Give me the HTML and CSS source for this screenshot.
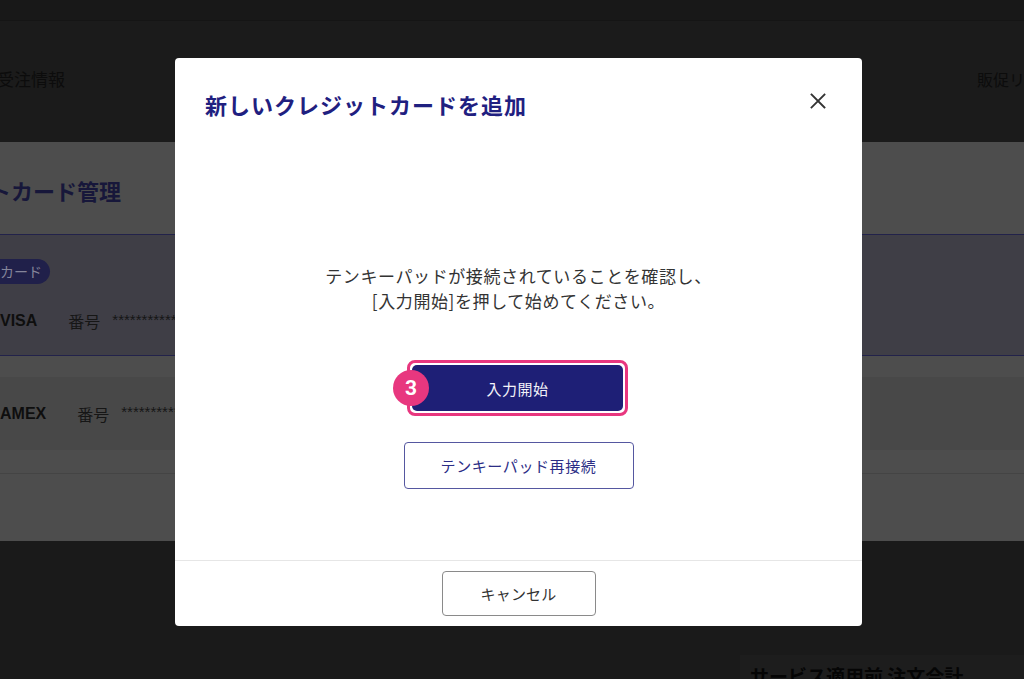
FILE: index.html
```html
<!DOCTYPE html>
<html lang="ja">
<head>
<meta charset="utf-8">
<title>新しいクレジットカードを追加</title>
<link rel="stylesheet" href="styles.css">
</head>
<body>
<div class="page">
  <div class="topstrip"></div>
  <header class="nav">
    <span class="nav-left">受注情報</span>
    <span class="nav-right">販促リスト</span>
  </header>
  <section class="panel">
    <h1 class="panel-title">クレジットカード管理</h1>
    <div class="card-row selected">
      <span class="badge">メインカード</span>
      <div class="card-line"><b class="brand">VISA</b><span class="label">番号</span><span class="stars">****************</span></div>
    </div>
    <div class="gap-band"></div>
    <div class="card-row plain">
      <div class="card-line"><b class="brand">AMEX</b><span class="label">番号</span><span class="stars">****************</span></div>
    </div>
    <div class="rest-a"></div>
    <div class="rest-b"></div>
  </section>
  <section class="below">
    <div class="below-band"></div>
    <div class="summary"><h2 class="summary-title">サービス適用前 注文合計</h2></div>
  </section>
</div>

<div class="overlay">
  <div class="modal" role="dialog">
    <div class="modal-header">
      <h2 class="modal-title">新しいクレジットカードを追加</h2>
      <button class="close" aria-label="閉じる">
        <svg width="16" height="16" viewBox="0 0 16 16"><path d="M1.5 1.5 L14.5 14.5 M14.5 1.5 L1.5 14.5" stroke="#333" stroke-width="1.8" fill="none" stroke-linecap="square"/></svg>
      </button>
    </div>
    <div class="modal-body">
      <p class="msg">テンキーパッドが接続されていることを確認し、<br>[入力開始]を押して始めてください。</p>
      <div class="highlight">
        <span class="step">3</span>
        <button class="btn-primary">入力開始</button>
      </div>
      <button class="btn-secondary">テンキーパッド再接続</button>
    </div>
    <div class="modal-footer">
      <button class="btn-cancel">キャンセル</button>
    </div>
  </div>
</div>
</body>
</html>
```
FILE: styles.css
```css
* { box-sizing: border-box; }
html, body { margin: 0; padding: 0; }
body {
  width: 1024px;
  height: 679px;
  overflow: hidden;
  background: #1a1a1a;
  font-family: "Noto Sans CJK JP", "Noto Sans", sans-serif;
  position: relative;
}
.page { width: 1024px; height: 679px; overflow: hidden; }
.topstrip { height: 21px; background: #181818; border-bottom: 1px solid #151515; }
.nav {
  height: 121px;
  background: #1b1b1b;
  display: flex;
  justify-content: space-between;
  align-items: flex-start;
  padding-top: 46px;
  font-size: 17px;
  color: #0c0c0c;
  line-height: 24px;
}
.nav-left { margin-left: -3px; }
.nav-right { margin-right: -33px; font-size: 16px; }

.panel { background: #4d4d4d; height: 399px; display: flex; flex-direction: column; }
.panel-title {
  margin: 0;
  padding-top: 30px;
  height: 92px;
  font-size: 22px;
  line-height: 36px;
  font-weight: 700;
  color: #17173a;
  text-indent: -99px;
  white-space: nowrap;
}
.card-row.selected {
  background: #3f3e46;
  border-top: 1px solid #22224a;
  border-bottom: 1px solid #22224a;
  height: 122px;
  padding-top: 23px;
}
.badge {
  display: inline-block;
  margin-left: -52px;
  height: 25px;
  line-height: 25px;
  padding: 0 8px 0 10px;
  border-radius: 13px;
  background: #20204a;
  color: #85859a;
  font-size: 14px;
}
.card-line {
  display: flex;
  align-items: center;
  height: 24px;
  white-space: nowrap;
}
.selected .card-line { margin-top: 25px; }
.brand { font-family: "Liberation Sans", "Noto Sans", sans-serif; font-size: 16px; font-weight: 700; color: #0e0e0e; }
.label { font-size: 16px; color: #161616; margin-left: 31px; }
.stars { font-family: "Liberation Sans", sans-serif; font-size: 15px; color: #161616; margin-left: 12px; position: relative; top: -2px; }
.gap-band { height: 21px; }
.card-row.plain { background: #484848; height: 73px; display: flex; align-items: center; }
.rest-a { height: 24px; border-bottom: 1px solid #444; }
.rest-b { flex: 1; }

.below { height: 138px; display: flex; flex-direction: column; overflow: hidden; }
.below-band { height: 114px; flex-shrink: 0; }
.summary { margin-left: 740px; flex: 1 0 auto; background: #1d1d1d; padding: 6px 0 0 10px; }
.summary-title { margin: 0; font-size: 19px; font-weight: 700; color: #050505; line-height: 30px; white-space: nowrap; }

.overlay {
  position: absolute;
  inset: 0;
  padding: 58px 0 0 175px;
}
.modal {
  width: 687px;
  height: 568px;
  background: #fff;
  border-radius: 4px;
  display: flex;
  flex-direction: column;
}
.modal-header {
  display: flex;
  justify-content: space-between;
  align-items: flex-start;
  padding: 30px 36px 0 30px;
  height: 62px;
}
.modal-title {
  margin: 0;
  font-size: 22px;
  line-height: 32px;
  font-weight: 700;
  letter-spacing: 1px;
  color: #1f2080;
}
.close {
  margin-top: 5px;
  padding: 0;
  border: 0;
  background: none;
  width: 16px;
  height: 16px;
  display: block;
}
.close svg { display: block; }
.modal-body {
  flex: 1;
  display: flex;
  flex-direction: column;
  align-items: center;
  padding-top: 143px;
}
.msg {
  margin: 0;
  text-align: center;
  font-size: 17px;
  line-height: 25px;
  letter-spacing: 0.6px;
  color: #333;
}
.highlight {
  position: relative;
  margin-top: 47px;
  border: 3px solid #e8377f;
  border-radius: 8px;
  padding: 2px;
  background: #fff;
  margin-left: -2px;
}
.step {
  position: absolute;
  left: -17px;
  top: 7px;
  width: 36px;
  height: 36px;
  border-radius: 50%;
  background: #e8377f;
  color: #fff;
  font-family: "Roboto", "Liberation Sans", sans-serif;
  font-weight: 700;
  font-size: 21px;
  line-height: 36px;
  text-align: center;
  z-index: 1;
}
.btn-primary {
  display: block;
  width: 211px;
  height: 46px;
  border: 0;
  border-radius: 5px;
  background: #1e1f76;
  color: #f2f2f8;
  font-family: inherit;
  font-size: 15px;
  letter-spacing: 0.5px;
  padding: 0;
}
.btn-secondary {
  margin-top: 26px;
  width: 230px;
  height: 47px;
  border: 1.5px solid #5557a0;
  border-radius: 4px;
  background: #fff;
  color: #2c2e86;
  font-family: inherit;
  font-size: 15px;
  letter-spacing: 0.6px;
}
.modal-footer {
  border-top: 1px solid #e6e6e6;
  padding: 10px 0;
  display: flex;
  justify-content: center;
}
.btn-cancel {
  width: 154px;
  height: 45px;
  border: 1px solid #8a8a8a;
  border-radius: 4px;
  background: #fff;
  color: #333;
  font-family: inherit;
  font-size: 15px;
  letter-spacing: 0.2px;
}
```
